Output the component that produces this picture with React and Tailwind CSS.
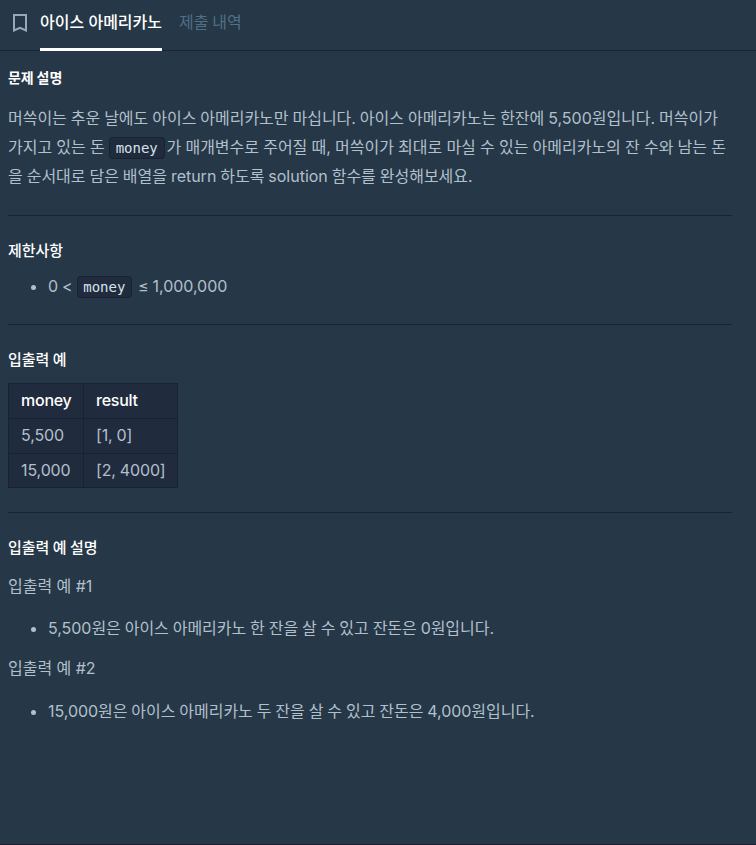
const inputOutput = [
  { money: '5,500', result: '[1, 0]' },
  { money: '15,000', result: '[2, 4000]' },
]

function SectionTitle({ children }) {
  return <h6 className="text-[15px] leading-[21px] font-medium text-white">{children}</h6>
}

function Code({ children }) {
  return (
    <code className="mr-[2px] rounded border border-[#172334] bg-[#202b3d] px-[5.8px] py-[2px] font-['DejaVu_Sans_Mono',monospace] text-sm leading-[20px] text-[#d7e2eb]">
      {children}
    </code>
  )
}

function Divider() {
  return <hr className="my-6 h-px border-0 bg-[#172334]" />
}

function BulletList({ children }) {
  return (
    <ul className="list-disc pl-10 tracking-[-0.04px]">
      <li>{children}</li>
    </ul>
  )
}

function App() {
  return (
    <div className="flex h-[845px] w-[756px] flex-col border-b border-[#1a1f36] bg-[#263747] font-['Inter','Noto_Sans_CJK_KR',sans-serif] text-base leading-[29px] whitespace-nowrap text-[#b2c0cc]">
      {/* 상단 탭 */}
      <nav className="flex h-[51px] shrink-0 border-b border-[#172334] pl-3 leading-6">
        <svg className="mt-[14px] mr-[12px] h-[18px] w-4 text-[#98a8b9]" viewBox="0 0 16 18" fill="none" stroke="currentColor" strokeWidth="2">
          <path d="M2 1h12v15.5l-6-2.7-6 2.7z" />
        </svg>
        <a className="h-[51px] w-[122px] border-b-[3px] border-white pt-[10px] font-medium text-white">아이스 아메리카노</a>
        <a className="ml-[17px] pt-[10px] text-[#4f7086] [word-spacing:-0.6px]">제출 내역</a>
      </nav>

      <main className="pt-4 pr-6 pl-2 tracking-[-0.02px] [word-spacing:-0.5px]">
        <h6 className="text-sm leading-[21px] font-bold text-white">문제 설명</h6>
        <p className="mt-4">
          머쓱이는 추운 날에도 아이스 아메리카노만 마십니다. 아이스 아메리카노는 한잔에 5,500원입니다. 머쓱이가
          <br />
          <span className="[word-spacing:-0.25px]">
            가지고 있는 돈 <Code>money</Code>가 매개변수로 주어질 때, 머쓱이가 최대로 마실 수 있는 아메리카노의 잔 수와 남는 돈
          </span>
          <br />
          을 순서대로 담은 배열을 return 하도록 solution 함수를 완성해보세요.
        </p>

        <Divider />

        <SectionTitle>제한사항</SectionTitle>
        <div className="mt-[11px] mb-[23px]">
          <BulletList>
            0 &lt; <Code>money</Code> ≤ 1,000,000
          </BulletList>
        </div>

        <hr className="mb-6 h-px border-0 bg-[#172334]" />

        <SectionTitle>입출력 예</SectionTitle>
        <table className="mt-[13px] w-[170px] table-fixed border-collapse bg-[#202b3d] leading-[33px]">
          <thead>
            <tr className="text-left text-white">
              <th className="w-[75px] border border-[#172334] px-3 pb-px font-medium tracking-[-0.25px]">money</th>
              <th className="border border-[#172334] px-3 pb-px font-medium tracking-[-0.25px]">result</th>
            </tr>
          </thead>
          <tbody>
            {inputOutput.map((row) => (
              <tr key={row.money} className="tracking-[-0.12px] [&>td]:pb-px last:[&>td]:pb-0">
                <td className="border border-[#172334] px-3">{row.money}</td>
                <td className="border border-[#172334] px-3">{row.result}</td>
              </tr>
            ))}
          </tbody>
        </table>

        <Divider />

        <SectionTitle>입출력 예 설명</SectionTitle>
        <p className="mt-[14px] mb-[13px] [word-spacing:0px]">입출력 예 #1</p>
        <BulletList>5,500원은 아이스 아메리카노 한 잔을 살 수 있고 잔돈은 0원입니다.</BulletList>
        <p className="mt-[11px] mb-[14px] [word-spacing:0px]">입출력 예 #2</p>
        <BulletList>15,000원은 아이스 아메리카노 두 잔을 살 수 있고 잔돈은 4,000원입니다.</BulletList>
      </main>
    </div>
  )
}

export default App
